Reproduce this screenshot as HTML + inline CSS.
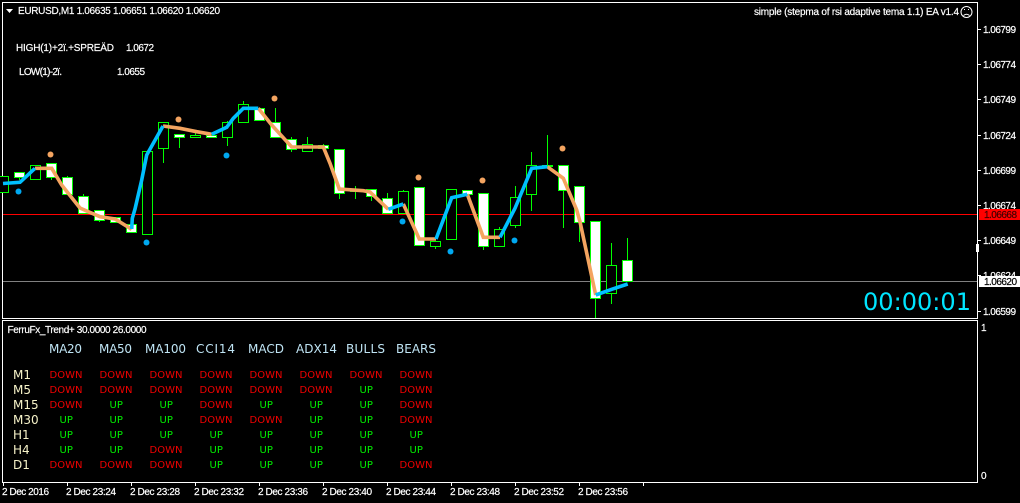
<!DOCTYPE html>
<html><head><meta charset="utf-8"><style>
html,body{margin:0;padding:0;background:#000;width:1020px;height:503px;overflow:hidden}
svg{display:block}
.t{font:10px "Liberation Sans",sans-serif;fill:#fff;stroke:#fff;stroke-width:.2}
.h{font:12px "DejaVu Sans",sans-serif;fill:#bfe4f4}
.l{font:12px "DejaVu Sans",sans-serif;fill:#f6f2c8}
.d{font:10px "DejaVu Sans",sans-serif;fill:#f00000}
.u{font:10px "DejaVu Sans",sans-serif;fill:#00f000}
</style></head><body>
<svg width="1020" height="503" viewBox="0 0 1020 503" xmlns="http://www.w3.org/2000/svg">
<rect width="1020" height="503" fill="#000"/>
<path d="M3 214.5H977" stroke="#f00" fill="none"/>
<path d="M3 281.5H977" stroke="#808080" fill="none"/>
<path fill="none" stroke="#fff" d="M2.5 2.5H977.5V318.5H2.5ZM2.5 320.5H977.5V482.5H2.5Z"/>
<path fill="none" stroke="#fff" d="M978 29.5h3M978 64.5h3M978 99.5h3M978 135.5h3M978 170.5h3M978 205.5h3M978 240.5h3M978 275.5h3M978 311.5h3M3.5 483v3M67.5 483v3M131.5 483v3M195.5 483v3M259.5 483v3M323.5 483v3M387.5 483v3M451.5 483v3M515.5 483v3M579.5 483v3M643.5 483v3"/>
<rect x="976" y="244" width="3" height="8" fill="#fff"/>
<!-- wicks -->
<path fill="none" stroke="#0f0" d="M19.5 172v8M51.5 177v3M67.5 176v2M83.5 194v3M99.5 220v2M163.5 148v15M179.5 137v11M195.5 132v3M227.5 121v2M227.5 137v9M243.5 101v4M275.5 108v15M291.5 137v15M307.5 137v8M323.5 144v2M339.5 193v6M355.5 186v13M371.5 196v5M387.5 193v6M403.5 190v2M435.5 246v3M483.5 246v4M499.5 227v3M515.5 186v12M515.5 225v3M531.5 152v14M531.5 194v17M547.5 135v31M563.5 190v38M579.5 222v20M595.5 298v20M611.5 243v23M611.5 293v11M627.5 238v23"/>
<!-- hollow bodies -->
<g fill="#000" stroke="#0f0">
<rect x="-1.5" y="176.5" width="10" height="16"/>
<rect x="30.5" y="165.5" width="10" height="14"/>
<rect x="142.5" y="151.5" width="10" height="83"/>
<rect x="158.5" y="122.5" width="10" height="26"/>
<rect x="190.5" y="135.5" width="10" height="2"/>
<rect x="222.5" y="122.5" width="10" height="15"/>
<rect x="238.5" y="104.5" width="10" height="18"/>
<rect x="302.5" y="144.5" width="10" height="7"/>
<rect x="350.5" y="190.5" width="10" height="1"/>
<rect x="398.5" y="191.5" width="10" height="22"/>
<rect x="430.5" y="241.5" width="10" height="5"/>
<rect x="446.5" y="189.5" width="10" height="50"/>
<rect x="494.5" y="229.5" width="10" height="17"/>
<rect x="510.5" y="197.5" width="10" height="28"/>
<rect x="526.5" y="165.5" width="10" height="29"/>
<rect x="542.5" y="165.5" width="10" height="1"/>
<rect x="606.5" y="265.5" width="10" height="28"/>
</g>
<!-- white bodies -->
<g fill="#fff" stroke="#0f0">
<rect x="14.5" y="172.5" width="10" height="5"/>
<rect x="46.5" y="163.5" width="10" height="14"/>
<rect x="62.5" y="177.5" width="10" height="17"/>
<rect x="78.5" y="196.5" width="10" height="17"/>
<rect x="94.5" y="210.5" width="10" height="10"/>
<rect x="110.5" y="217.5" width="10" height="5"/>
<rect x="126.5" y="224.5" width="10" height="8"/>
<rect x="174.5" y="134.5" width="10" height="3"/>
<rect x="206.5" y="135.5" width="10" height="2"/>
<rect x="254.5" y="108.5" width="10" height="12"/>
<rect x="270.5" y="122.5" width="10" height="15"/>
<rect x="286.5" y="139.5" width="10" height="10"/>
<rect x="318.5" y="145.5" width="10" height="3"/>
<rect x="334.5" y="149.5" width="10" height="44"/>
<rect x="366.5" y="189.5" width="10" height="7"/>
<rect x="382.5" y="198.5" width="10" height="15"/>
<rect x="414.5" y="187.5" width="10" height="58"/>
<rect x="462.5" y="190.5" width="10" height="4"/>
<rect x="478.5" y="193.5" width="10" height="53"/>
<rect x="558.5" y="165.5" width="10" height="25"/>
<rect x="574.5" y="186.5" width="10" height="36"/>
<rect x="590.5" y="221.5" width="10" height="77"/>
<rect x="622.5" y="260.5" width="10" height="21"/>
</g>
<!-- step lines -->
<g fill="none" stroke="#f4a460" stroke-width="3.6">
<path d="M35 168.3H51.7L61.7 185L68 193L80 208L86.7 211L100 216.7L115 219L131.7 229.3"/>
<path d="M163 126L180 128.3L196.7 131.7L211.7 134.3"/>
<path d="M258.3 108.3L271.7 125L291.7 147H323.3L330 163.3L339.3 189L363.3 190.7L370 192L388.3 209.3"/>
<path d="M403.3 204L419.3 239H436"/>
<path d="M467.3 194.3L483.3 237.3H500"/>
<path d="M547.3 166.7L563.3 178.3L576.7 210L580 221.7L595.7 295"/>
</g>
<g fill="none" stroke="#00bfff" stroke-width="3.6">
<path d="M3 183.5L20 182.3L35 168.3"/>
<path d="M131.7 229L132.3 218.3L135 209L141.7 180L146.7 155L163 126"/>
<path d="M211.7 134.3L226.7 127.3L233.3 118.3L243.3 108.3H258.3"/>
<path d="M388.3 209.3L403.3 204"/>
<path d="M436 239L451.7 197.7L467.3 194.3"/>
<path d="M500 237.3L515 208.3L531.7 168.3L547.3 166.7"/>
<path d="M595.7 295L611.7 289.3L627.7 284"/>
</g>
<g fill="#f4a460">
<circle cx="50.5" cy="154.5" r="3"/><circle cx="178.5" cy="119.5" r="3"/><circle cx="274.5" cy="98.5" r="3"/><circle cx="418.5" cy="177.5" r="3"/><circle cx="482.5" cy="180.5" r="3"/><circle cx="562.5" cy="148.5" r="3"/>
</g>
<g fill="#00a8f0">
<circle cx="18.5" cy="191.5" r="3"/><circle cx="146.5" cy="242.5" r="3"/><circle cx="226.5" cy="155.5" r="3"/><circle cx="402.5" cy="221.5" r="3"/><circle cx="450.5" cy="251.5" r="3"/><circle cx="514.5" cy="240.5" r="3"/>
</g>
<!-- header -->
<path d="M6 9h7l-3.5 4z" fill="#fff"/>
<text class="t" x="18" y="14" textLength="202">EURUSD,M1  1.06635 1.06651 1.06620 1.06620</text>
<text class="t" x="16" y="51" textLength="98">HIGH(1)+2ï.+SPREÄD</text>
<text class="t" x="126" y="51" textLength="28">1.0672</text>
<text class="t" x="19" y="75" textLength="43">LOW(1)-2ï.</text>
<text class="t" x="117" y="75" textLength="28">1.0655</text>
<text class="t" x="754" y="15" textLength="205">simple (stepma of rsi adaptive tema 1.1) EA  v1.4</text>
<g fill="none" stroke="#fff"><circle cx="966.5" cy="12" r="5.5"/><path d="M963.5 15.5q3-2.5 6 0"/></g>
<path d="M964 9h1v1h-1zM968 9h1v1h-1z" fill="#fff"/>
<!-- price axis -->
<text class="t" x="983" y="33" textLength="33">1.06799</text>
<text class="t" x="983" y="68" textLength="33">1.06774</text>
<text class="t" x="983" y="103" textLength="33">1.06749</text>
<text class="t" x="983" y="139" textLength="33">1.06724</text>
<text class="t" x="983" y="174" textLength="33">1.06699</text>
<text class="t" x="983" y="209" textLength="33">1.06674</text>
<text class="t" x="983" y="244" textLength="33">1.06649</text>
<text class="t" x="983" y="279" textLength="33">1.06624</text>
<text class="t" x="983" y="315" textLength="33">1.06599</text>
<rect x="979" y="209" width="41" height="11" fill="#f00"/>
<text class="t" style="fill:#400000;stroke:#400000" x="984" y="218" textLength="33">1.06668</text>
<rect x="979" y="276" width="41" height="11" fill="#fff"/>
<text class="t" style="fill:#000;stroke:#000" x="984" y="285" textLength="33">1.06620</text>
<text x="863" y="310" style="font:24px 'DejaVu Sans',sans-serif;fill:#00e5ff" textLength="108">00:00:01</text>
<!-- indicator -->
<text class="t" x="7.5" y="333" textLength="139">FerruFx_Trend+ 30.0000 26.0000</text>
<text class="t" x="981" y="331">1</text>
<text class="t" x="981" y="479">0</text>
<text class="h" x="49" y="353" textLength="33">MA20</text>
<text class="h" x="99" y="353" textLength="33">MA50</text>
<text class="h" x="145" y="353" textLength="41">MA100</text>
<text class="h" x="196" y="353" textLength="39">CCI14</text>
<text class="h" x="248" y="353" textLength="36">MACD</text>
<text class="h" x="296" y="353" textLength="41">ADX14</text>
<text class="h" x="346" y="353" textLength="39">BULLS</text>
<text class="h" x="396" y="353" textLength="40">BEARS</text>
<text class="l" x="13" y="379">M1</text>
<text class="l" x="13" y="394">M5</text>
<text class="l" x="13" y="409">M15</text>
<text class="l" x="13" y="424">M30</text>
<text class="l" x="13" y="439">H1</text>
<text class="l" x="13" y="454">H4</text>
<text class="l" x="13" y="469">D1</text>
<!-- row M1 -->
<text class="d" x="49.5" y="378">DOWN</text><text class="d" x="99.5" y="378">DOWN</text><text class="d" x="149.5" y="378">DOWN</text><text class="d" x="199.5" y="378">DOWN</text><text class="d" x="249.5" y="378">DOWN</text><text class="d" x="299.5" y="378">DOWN</text><text class="d" x="349.5" y="378">DOWN</text><text class="d" x="399.5" y="378">DOWN</text>
<!-- row M5 -->
<text class="d" x="49.5" y="393">DOWN</text><text class="d" x="99.5" y="393">DOWN</text><text class="d" x="149.5" y="393">DOWN</text><text class="d" x="199.5" y="393">DOWN</text><text class="d" x="249.5" y="393">DOWN</text><text class="d" x="299.5" y="393">DOWN</text><text class="u" x="359.5" y="393">UP</text><text class="d" x="399.5" y="393">DOWN</text>
<!-- row M15 -->
<text class="d" x="49.5" y="408">DOWN</text><text class="u" x="109.5" y="408">UP</text><text class="u" x="159.5" y="408">UP</text><text class="d" x="199.5" y="408">DOWN</text><text class="u" x="259.5" y="408">UP</text><text class="u" x="309.5" y="408">UP</text><text class="u" x="359.5" y="408">UP</text><text class="d" x="399.5" y="408">DOWN</text>
<!-- row M30 -->
<text class="u" x="59.5" y="423">UP</text><text class="u" x="109.5" y="423">UP</text><text class="u" x="159.5" y="423">UP</text><text class="d" x="199.5" y="423">DOWN</text><text class="d" x="249.5" y="423">DOWN</text><text class="u" x="309.5" y="423">UP</text><text class="u" x="359.5" y="423">UP</text><text class="d" x="399.5" y="423">DOWN</text>
<!-- row H1 -->
<text class="u" x="59.5" y="438">UP</text><text class="u" x="109.5" y="438">UP</text><text class="u" x="159.5" y="438">UP</text><text class="u" x="209.5" y="438">UP</text><text class="u" x="259.5" y="438">UP</text><text class="u" x="309.5" y="438">UP</text><text class="u" x="359.5" y="438">UP</text><text class="u" x="409.5" y="438">UP</text>
<!-- row H4 -->
<text class="u" x="59.5" y="453">UP</text><text class="u" x="109.5" y="453">UP</text><text class="d" x="149.5" y="453">DOWN</text><text class="u" x="209.5" y="453">UP</text><text class="u" x="259.5" y="453">UP</text><text class="u" x="309.5" y="453">UP</text><text class="u" x="359.5" y="453">UP</text><text class="u" x="409.5" y="453">UP</text>
<!-- row D1 -->
<text class="d" x="49.5" y="468">DOWN</text><text class="d" x="99.5" y="468">DOWN</text><text class="d" x="149.5" y="468">DOWN</text><text class="u" x="209.5" y="468">UP</text><text class="u" x="259.5" y="468">UP</text><text class="u" x="309.5" y="468">UP</text><text class="u" x="359.5" y="468">UP</text><text class="d" x="399.5" y="468">DOWN</text>
<!-- time axis -->
<text class="t" x="2" y="495" textLength="47">2 Dec 2016</text>
<text class="t" x="66" y="495" textLength="50">2 Dec 23:24</text>
<text class="t" x="130" y="495" textLength="50">2 Dec 23:28</text>
<text class="t" x="194" y="495" textLength="50">2 Dec 23:32</text>
<text class="t" x="258" y="495" textLength="50">2 Dec 23:36</text>
<text class="t" x="322" y="495" textLength="50">2 Dec 23:40</text>
<text class="t" x="386" y="495" textLength="50">2 Dec 23:44</text>
<text class="t" x="450" y="495" textLength="50">2 Dec 23:48</text>
<text class="t" x="514" y="495" textLength="50">2 Dec 23:52</text>
<text class="t" x="578" y="495" textLength="50">2 Dec 23:56</text>
</svg>
</body></html>
